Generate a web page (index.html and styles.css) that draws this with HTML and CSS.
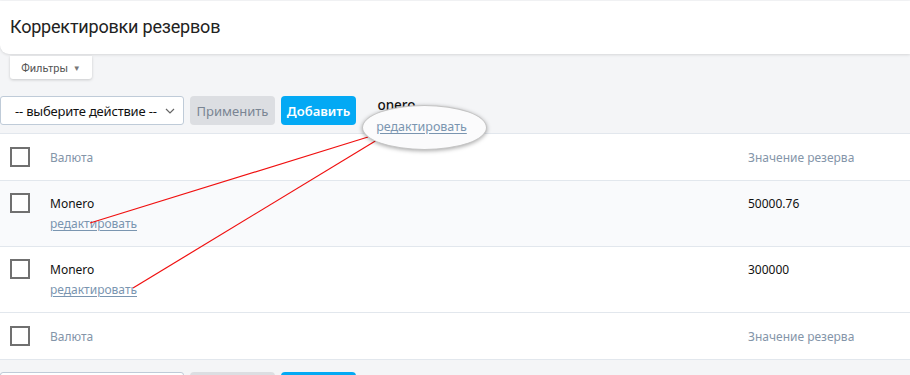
FILE: index.html
```html
<!DOCTYPE html>
<html lang="ru">
<head>
<meta charset="utf-8">
<title>Корректировки резервов</title>
<link rel="stylesheet" href="styles.css">
</head>
<body>
<div class="page">
  <header class="card-head"><h1 class="title">Корректировки резервов</h1></header>
  <div class="filters"><button class="filter-btn">Фильтры <span class="tri">▼</span></button></div>
  <div class="actions">
    <div class="select"><span>-- выберите действие --</span>
      <svg class="chev" width="10" height="6" viewBox="0 0 10 6"><path d="M1 1l4 4 4-4" fill="none" stroke="#666" stroke-width="1.2"/></svg>
    </div>
    <button class="btn btn-gray">Применить</button>
    <button class="btn btn-blue">Добавить</button>
  </div>
  <div class="table">
    <div class="row head">
      <div class="cb"><span class="box"></span></div>
      <div class="c1">Валюта</div>
      <div class="c2">Значение резерва</div>
    </div>
    <div class="row item odd">
      <div class="cb"><span class="box"></span></div>
      <div class="c1"><div class="name">Monero</div><a class="link" href="#">редактировать</a></div>
      <div class="c2 val">50000.76</div>
    </div>
    <div class="row item">
      <div class="cb"><span class="box"></span></div>
      <div class="c1"><div class="name">Monero</div><a class="link" href="#">редактировать</a></div>
      <div class="c2 val">300000</div>
    </div>
    <div class="row head">
      <div class="cb"><span class="box"></span></div>
      <div class="c1">Валюта</div>
      <div class="c2">Значение резерва</div>
    </div>
  </div>
  <div class="actions bottom">
    <div class="select"><span>-- выберите действие --</span></div>
    <button class="btn btn-gray">Применить</button>
    <button class="btn btn-blue">Добавить</button>
  </div>

  <svg class="lines" width="910" height="375" viewBox="0 0 910 375">
    <line x1="368" y1="137" x2="90" y2="223" stroke="#f01010" stroke-width="1.2"/>
    <line x1="377" y1="140" x2="133" y2="288" stroke="#f01010" stroke-width="1.2"/>
  </svg>
  <div class="clip-name"><span>Monero</span></div>
  <div class="callout"><a class="link big" href="#">редактировать</a></div>
</div>
</body>
</html>
```
FILE: styles.css
```css
* { box-sizing: border-box; }
html, body { margin: 0; padding: 0; }
body {
  background: #f4f5f7;
  font-family: "Noto Sans", "Open Sans", sans-serif;
  width: 910px;
  height: 375px;
  overflow: hidden;
}
.page { position: relative; padding-top: 1px; }
.card-head {
  background: #fff;
  height: 53px;
  border-radius: 0 0 0 9px;
  box-shadow: 0 1px 3px rgba(0,0,0,0.12);
  display: flex;
  align-items: center;
  padding: 0 10px 2px;
}
.title {
  margin: 0;
  font-family: Roboto, "Noto Sans", sans-serif;
  font-weight: 400;
  font-size: 18px;
  color: #222;
  letter-spacing: -0.2px;
}
.filters { display: flex; padding: 2px 0 0 10px; }
.filter-btn {
  background: #fff;
  border: 0;
  height: 23px;
  width: 82px;
  border-radius: 0 0 3px 3px;
  box-shadow: 0 1px 3px rgba(0,0,0,0.18);
  font-family: Roboto, "Noto Sans", sans-serif;
  font-size: 11px;
  color: #555;
  padding: 1px 0 0 0;
}
.tri { font-size: 8px; color: #777; vertical-align: 1px; margin-left: 2px; }
.actions {
  display: flex;
  gap: 6px;
  margin-top: 17px;
  height: 29px;
}
.select {
  width: 184px;
  height: 29px;
  border: 1px solid #bfcbd8;
  border-radius: 3px;
  background: #fff;
  display: flex;
  align-items: center;
  justify-content: space-between;
  padding: 0 8px 0 14px;
  font-size: 13px;
  color: #111;
  letter-spacing: -0.2px;
}
.btn {
  height: 29px;
  border: 0;
  border-radius: 4px;
  font-family: "Noto Sans", sans-serif;
  font-size: 13px;
  padding: 0;
}
.btn-gray { width: 85px; background: #dcdee2; color: #7a8593; }
.btn-blue { width: 75px; background: #03a9f4; color: #fff; font-weight: 600; }
.table {
  margin-top: 8px;
  background: #fff;
  border-top: 1px solid #e2e7ed;
}
.row {
  display: grid;
  grid-template-columns: 50px 698px 162px;
  border-bottom: 1px solid #e2e7ed;
  font-size: 12px;
}
.row.head { height: 47px; align-items: center; color: #8495a9; }
.row.head .cb { display: flex; align-items: center; }
.row.item { height: 66px; padding-top: 12px; color: #111; }
.row.item .c1, .row.item .c2 { padding-top: 1px; }
.row.odd { background: #f9fafc; }
.cb { padding-left: 10px; }
.box {
  display: block;
  width: 20px;
  height: 20px;
  border: 2px solid #707070;
  background: #fff;
}
.name, .val { line-height: 20px; }
.link {
  display: inline-block;
  line-height: 20px;
  color: #7a95b0;
  text-decoration: underline;
  text-underline-offset: 2px;
}
.actions.bottom { margin-top: 12px; }
.lines { position: absolute; left: 0; top: 0; pointer-events: none; }
.clip-name {
  position: absolute;
  left: 377px;
  top: 96px;
  width: 50px;
  height: 20px;
  overflow: hidden;
  font-size: 13.5px;
  font-weight: 500;
  color: #111;
}
.clip-name span { margin-left: -12px; }
.callout {
  position: absolute;
  left: 362px;
  top: 105px;
  width: 125px;
  height: 45px;
  border-radius: 50%;
  background: #fbfbfc;
  border: 1px solid #c4c4c4;
  box-shadow: 0 1px 4px rgba(0,0,0,0.35);
  display: flex;
  align-items: center;
  justify-content: center;
  padding: 0 6px 1px 0;
}
.link.big { font-size: 12.5px; }
```
